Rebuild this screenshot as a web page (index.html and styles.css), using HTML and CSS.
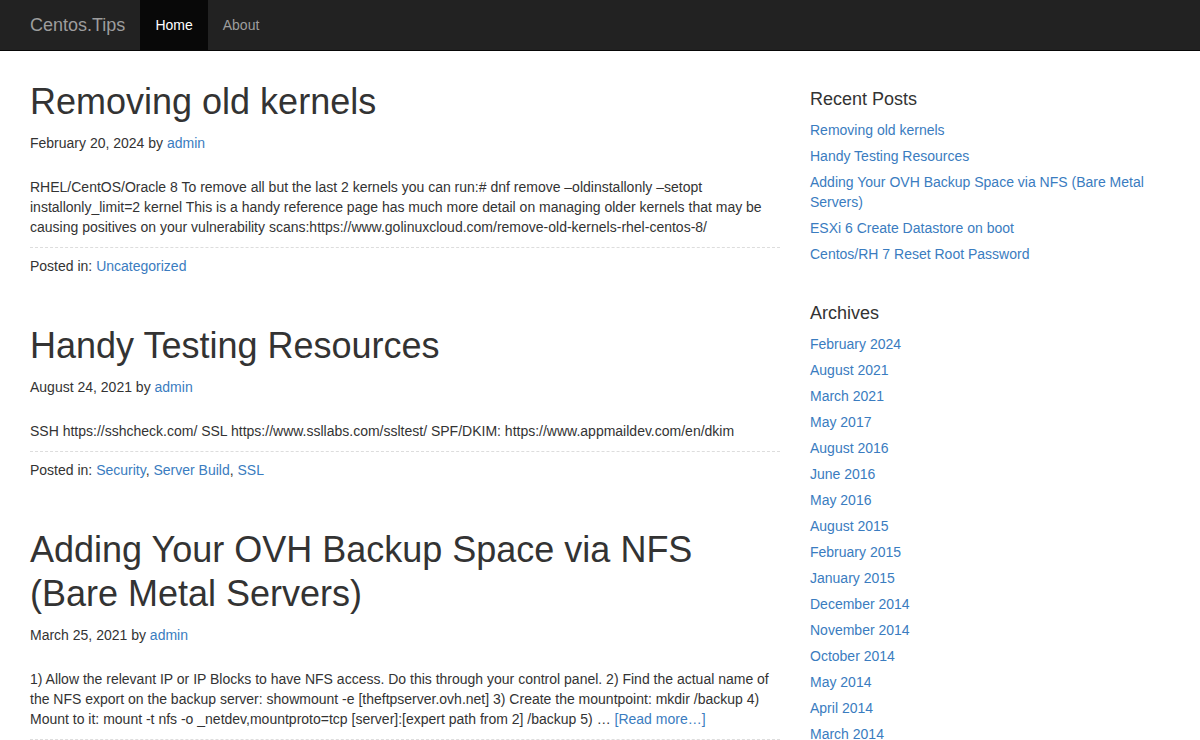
FILE: index.html
```html
<!DOCTYPE html>
<html lang="en">
<head>
<meta charset="utf-8">
<title>Centos.Tips</title>
<link rel="stylesheet" href="styles.css">
</head>
<body>
<nav class="navbar">
  <div class="container nav-inner">
    <a class="brand" href="#">Centos.Tips</a>
    <ul class="nav">
      <li class="active"><a href="#">Home</a></li>
      <li><a href="#">About</a></li>
    </ul>
  </div>
</nav>
<div class="container page">
  <main class="main">
    <article class="post">
      <h1 class="post-title">Removing old kernels</h1>
      <p class="meta">February 20, 2024 by <a href="#">admin</a></p>
      <div class="entry">RHEL/CentOS/Oracle 8 To remove all but the last 2 kernels you can run:# dnf remove –oldinstallonly –setopt installonly_limit=2 kernel This is a handy reference page has much more detail on managing older kernels that may be causing positives on your vulnerability scans:https://www.golinuxcloud.com/remove-old-kernels-rhel-centos-8/</div>
      <p class="post-footer">Posted in: <a href="#">Uncategorized</a></p>
    </article>
    <article class="post">
      <h1 class="post-title">Handy Testing Resources</h1>
      <p class="meta">August 24, 2021 by <a href="#">admin</a></p>
      <div class="entry">SSH https://sshcheck.com/ SSL https://www.ssllabs.com/ssltest/ SPF/DKIM: https://www.appmaildev.com/en/dkim</div>
      <p class="post-footer">Posted in: <a href="#">Security</a>, <a href="#">Server Build</a>, <a href="#">SSL</a></p>
    </article>
    <article class="post">
      <h1 class="post-title">Adding Your OVH Backup Space via NFS (Bare Metal Servers)</h1>
      <p class="meta">March 25, 2021 by <a href="#">admin</a></p>
      <div class="entry">1) Allow the relevant IP or IP Blocks to have NFS access. Do this through your control panel. 2) Find the actual name of the NFS export on the backup server: showmount -e [theftpserver.ovh.net] 3) Create the mountpoint: mkdir /backup 4) Mount to it: mount -t nfs -o _netdev,mountproto=tcp [server]:[expert path from 2] /backup 5) … <a href="#">[Read more…]</a></div>
      <p class="post-footer">Posted in: <a href="#">Server Build</a></p>
    </article>
  </main>
  <aside class="sidebar">
    <section class="widget">
      <h3 class="widget-title">Recent Posts</h3>
      <ul class="widget-list">
        <li><a href="#">Removing old kernels</a></li>
        <li><a href="#">Handy Testing Resources</a></li>
        <li><a href="#">Adding Your OVH Backup Space via NFS (Bare Metal Servers)</a></li>
        <li><a href="#">ESXi 6 Create Datastore on boot</a></li>
        <li><a href="#">Centos/RH 7 Reset Root Password</a></li>
      </ul>
    </section>
    <section class="widget">
      <h3 class="widget-title">Archives</h3>
      <ul class="widget-list">
        <li><a href="#">February 2024</a></li>
        <li><a href="#">August 2021</a></li>
        <li><a href="#">March 2021</a></li>
        <li><a href="#">May 2017</a></li>
        <li><a href="#">August 2016</a></li>
        <li><a href="#">June 2016</a></li>
        <li><a href="#">May 2016</a></li>
        <li><a href="#">August 2015</a></li>
        <li><a href="#">February 2015</a></li>
        <li><a href="#">January 2015</a></li>
        <li><a href="#">December 2014</a></li>
        <li><a href="#">November 2014</a></li>
        <li><a href="#">October 2014</a></li>
        <li><a href="#">May 2014</a></li>
        <li><a href="#">April 2014</a></li>
        <li><a href="#">March 2014</a></li>
        <li><a href="#">February 2014</a></li>
      </ul>
    </section>
  </aside>
</div>
</body>
</html>
```
FILE: styles.css
```css
* { box-sizing: border-box; }
html, body { margin: 0; padding: 0; }
body {
  font-family: "Liberation Sans", Arial, Helvetica, sans-serif;
  font-size: 14px;
  line-height: 20px;
  color: #333;
  background: #fff;
}
a { color: #3a7cc0; text-decoration: none; }

.container {
  width: 1170px;
  margin: 0 auto;
  padding: 0 15px;
}

.navbar {
  background: #222;
  border-bottom: 1px solid #080808;
  height: 51px;
}
.nav-inner {
  display: flex;
  height: 50px;
}
.brand {
  margin-left: -15px;
  padding: 15px;
  font-size: 18px;
  line-height: 20px;
  color: #9d9d9d;
}
.nav {
  display: flex;
  list-style: none;
  margin: 0;
  padding: 0;
}
.nav a {
  display: block;
  padding: 15px;
  line-height: 20px;
  color: #9d9d9d;
}
.nav .active a {
  background: #080808;
  color: #fff;
}

.page {
  display: flex;
  gap: 30px;
  padding-top: 29px;
}
.main { width: 750px; flex: none; }
.sidebar { width: 360px; flex: none; padding-top: 9px; }

.post { margin-bottom: 48px; }
.post-title {
  font-size: 36px;
  line-height: 44px;
  font-weight: 400;
  margin: 0 0 9px;
  color: #333;
}
.meta { margin: 0 0 24px; }
.entry {
  padding-bottom: 10px;
  border-bottom: 1px dashed #ddd;
}
.post-footer { margin: 8px 0 0; }

.widget { margin-bottom: 39px; }
.widget-title {
  font-size: 18px;
  line-height: 20px;
  font-weight: 400;
  margin: 0 0 11px;
}
.widget-list {
  list-style: none;
  margin: 0;
  padding: 0;
}
.widget-list li { margin-bottom: 6px; }
```
